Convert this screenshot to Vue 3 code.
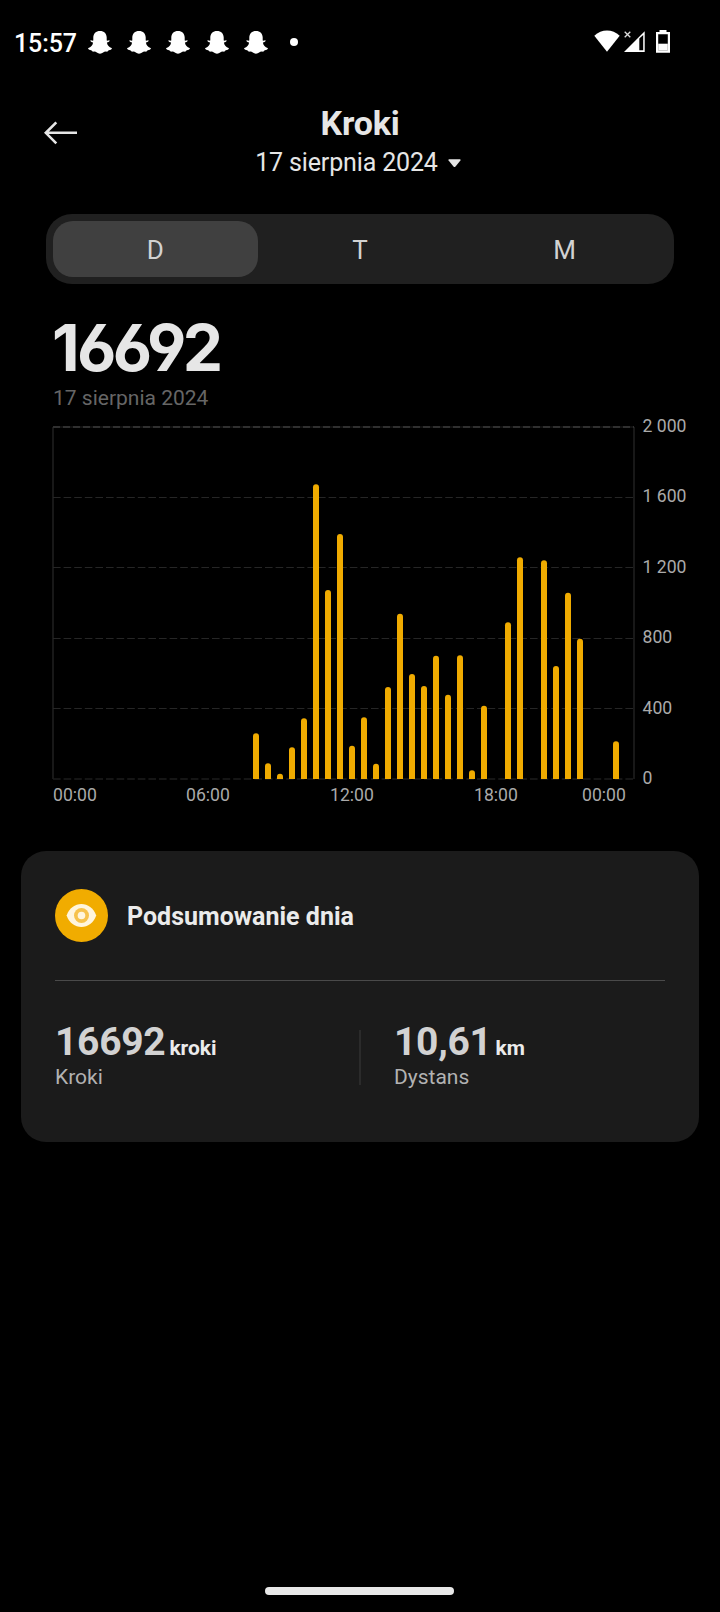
<script setup>
const notifications = 5
const baseline = 352
const bars = [
  [256, 45.7], [268, 15.7], [280, 5.3], [292, 31.7], [304, 60.7], [316, 294.7],
  [328, 189], [340, 245], [352, 33.3], [364, 61.7], [376, 15.3], [388, 92],
  [400, 165.3], [412, 105], [424, 93], [436, 123.3], [448, 84.3], [460, 123.7],
  [472, 8.7], [484, 73.3], [508, 156.7], [520, 221.7], [544, 218.7], [556, 113],
  [568, 186.3], [580, 140.3], [616, 37.7],
].map(([x, h]) => ({ x: x - 53 - 3, h }))

const barPath = ({ x, h }) =>
  `M${x} ${baseline}V${baseline - h + 3}a3 3 0 0 1 6 0V${baseline}z`

const gridLines = [70.5, 140.5, 211.5, 281.5]
const yLabels = [
  { text: '2 000', y: 5.3 }, { text: '1 600', y: 75.3 }, { text: '1 200', y: 146 },
  { text: '800', y: 216 }, { text: '400', y: 286.5 }, { text: '0', y: 357 },
]
const xLabels = [
  { text: '00:00', x: 22 }, { text: '06:00', x: 155 }, { text: '12:00', x: 299 },
  { text: '18:00', x: 443 }, { text: '00:00', x: 551 },
]
const tabs = ['D', 'T', 'M']
const stats = [
  { value: '16692', unit: 'kroki', label: 'Kroki' },
  { value: '10,61', unit: 'km', label: 'Dystans' },
]
</script>

<template>
  <div class="screen">
    <header class="status">
      <span class="clock">15:57</span>
      <div class="notifs">
        <svg v-for="n in notifications" :key="n" class="ghost" viewBox="0 0 24 23">
          <path d="M12 0C7.9 0 5.3 2.7 5.3 6.6V9.6C4.3 9.9 3.2 9 2.5 9.4c-.5.6.7 1.6 2.6 2.2C4.8 14.3 2.7 16.3.4 17c-.6.5-.4 1.2.8 1.7 1.6.6 2.3.3 2.7 1.1.4.9.9.9 2.4.8 1.9 0 3 2.2 5.7 2.2s3.8-2.2 5.7-2.2c1.5.1 2 .1 2.4-.8.4-.8 1.1-.5 2.7-1.1 1.2-.5 1.4-1.2.8-1.7-2.3-.7-4.4-2.7-4.7-5.4 1.9-.6 3.1-1.6 2.6-2.2-.7-.4-1.8.5-2.8.2v-3C18.7 2.7 16.1 0 12 0z" fill="#fff" />
        </svg>
        <i class="dot"></i>
      </div>
      <svg class="system" viewBox="0 0 78 24">
        <path d="M.3 5.7C7.5-1.4 18.5-1.4 25.7 5.7L13 21.7z" fill="#fff" />
        <path d="M30.700 1.700l5.600 5.600m0-5.600l-5.600 5.600" stroke="#ddd" stroke-width="1.300" />
        <path d="M30 22L50.700 1.300V22zM45.300 8.500V20.200H49.200V5z" fill="#fff" fill-rule="evenodd" />
        <path d="M65.500 0h7v2H76v20.700H62V2h3.500zM64.200 4.300V20.200h9.600V4.300z" fill="#fff" fill-rule="evenodd" />
        <path d="M64.200 13.700h9.600v6.500h-9.600z" fill="#fff" />
      </svg>
    </header>

    <nav class="top">
      <svg class="back" viewBox="0 0 34 24">
        <path d="M12.300 1.300L1.800 11.800L12.300 22.300M2 11.800H33" fill="none" stroke="#e6e6e6" stroke-width="2.600" />
      </svg>
      <div class="titles">
        <h1>Kroki</h1>
        <div class="picker">
          <span>17 sierpnia 2024</span>
          <svg class="caret" viewBox="0 0 13 9"><path d="M1 .3h11q1 .3.4 1.300L7.500 7.600q-1 1-2 0L.6 1.600Q0 .6 1 .3z" fill="#e6e6e6" /></svg>
        </div>
      </div>
    </nav>

    <div class="tabs">
      <div v-for="(t, i) in tabs" :key="t" class="tab" :class="{ active: i === 0 }">{{ t }}</div>
    </div>

    <section class="total">
      <div class="big">16692</div>
      <div class="day">17 sierpnia 2024</div>
    </section>

    <svg class="chart" viewBox="0 0 667 385">
      <path d="M0 0V352M581 0V352" class="frame" />
      <path d="M0 0H581" class="top-under" />
      <path d="M0 0H581" class="top-line" />
      <path v-for="y in gridLines" :key="y" :d="`M0 ${y}H581`" class="grid" />
      <path d="M0 352H581" class="base-line" />
      <path v-for="b in bars" :key="b.x" :d="barPath(b)" fill="#f0ab00" />
      <text v-for="l in yLabels" :key="l.text" x="589.500" :y="l.y">{{ l.text }}</text>
      <text v-for="l in xLabels" :key="l.x" :x="l.x" y="373.700" text-anchor="middle">{{ l.text }}</text>
    </svg>

    <section class="card">
      <div class="card-head">
        <svg class="eye" viewBox="0 0 53 53">
          <circle cx="26.500" cy="26.500" r="26.500" fill="#f1ac00" />
          <path d="M11.600 26.500C14.300 19 20 15.100 26.400 15.100S38.500 19 41.200 26.500C38.500 34 32.800 37.900 26.400 37.900S14.300 34 11.600 26.500z" fill="#fff5dd" />
          <circle cx="26.500" cy="26.500" r="7.500" fill="#f7c24b" />
          <circle cx="26.500" cy="26.500" r="3.800" fill="#fff5dd" />
        </svg>
        <h2>Podsumowanie dnia</h2>
      </div>
      <div class="stats">
        <div v-for="s in stats" :key="s.label" class="stat">
          <div class="line"><span class="value">{{ s.value }}</span><span class="unit">{{ s.unit }}</span></div>
          <div class="label">{{ s.label }}</div>
        </div>
      </div>
    </section>

    <div class="home"></div>
  </div>
</template>

<style>
body { background: #000; }
</style>

<style scoped>
* { box-sizing: border-box; }
.screen {
  width: 720px;
  height: 1612px;
  background: #000;
  color: #e6e6e6;
  font-family: Roboto, "Noto Sans", sans-serif;
  display: flex;
  flex-direction: column;
  overflow: hidden;
}
svg { display: block; flex: none; }
.status { height: 96px; padding: 27px 48px 0 14px; display: flex; align-items: flex-start; }
.clock { font-size: 25px; font-weight: 500; line-height: 34px; letter-spacing: -0.1px; color: #fff; width: 74px; }
.notifs { display: flex; gap: 15px; padding-top: 4px; }
.ghost { width: 24px; height: 23px; }
.dot { width: 8px; height: 8px; border-radius: 50%; background: #fff; margin: 7px 0 0 7px; }
.system { width: 78px; height: 24px; margin: 3px 0 0 auto; }
.top { height: 118px; display: flex; position: relative; justify-content: center; }
.back { position: absolute; left: 43.500px; top: 24.500px; width: 34px; height: 24px; }
.titles { display: flex; flex-direction: column; align-items: center; }
h1 { margin: 7px 0 0; font-size: 34px; line-height: 40px; font-weight: 700; letter-spacing: -0.2px; }
.picker { display: flex; align-items: center; gap: 10px; margin-top: 4px; padding-right: 4px; font-size: 25px; line-height: 32px; letter-spacing: -0.15px; }
.caret { width: 13px; height: 9px; }
.tabs { width: 628px; height: 70px; margin-left: 46px; padding: 7px; border-radius: 26px; background: #202020; display: flex; }
.tab { flex: 1; line-height: 58px; font-size: 26px; text-align: center; border-radius: 20px; color: #d2d2d2; }
.tab.active { background: #404040; }
.total { height: 143px; padding-left: 53px; }
.big {
  margin: 24px 0 0 -1px;
  font-family: Inter, sans-serif;
  font-weight: 700;
  font-size: 64px;
  line-height: 80px;
  letter-spacing: -3.600px;
  font-feature-settings: "ss01", "cv03", "cv04";
}
.big::first-letter { letter-spacing: -2.500px; }
.day { margin-top: -3px; font-size: 21px; line-height: 26px; color: #666; }
.chart { width: 667px; height: 385px; margin-left: 53px; overflow: visible; }
.chart text { font-family: Roboto, sans-serif; font-size: 17.6px; fill: #aaa; }
.frame { stroke: #202020; stroke-width: 1.500; fill: none; }
.top-under { stroke: #111; stroke-width: 2; }
.top-line { stroke: #303030; stroke-width: 2; stroke-dasharray: 7 3; }
.grid { stroke: #262626; stroke-width: 1; stroke-dasharray: 7.600 3; }
.base-line { stroke: #1c1c1c; stroke-width: 1.500; stroke-dasharray: 7.600 3; }
.card { margin: 39px 21px 0; height: 291px; border-radius: 25px; background: #1b1b1b; padding: 38px 34px 0; }
.card-head { display: flex; height: 92px; border-bottom: 1px solid #4a4a4a; }
.eye { width: 53px; height: 53px; }
h2 { margin: 0 0 0 19px; font-size: 25px; font-weight: 700; line-height: 55px; color: #ebebeb; }
.stats { display: flex; margin-top: 49px; }
.stat { width: 304px; height: 55px; }
.stat + .stat { border-left: 2px solid #2b2b2b; padding-left: 33px; width: 306px; }
.line { display: flex; align-items: baseline; margin-top: -12px; height: 48px; line-height: 48px; }
.value { font-size: 39px; font-weight: 700; letter-spacing: -0.3px; color: #d2d2d2; }
.unit { font-size: 21px; font-weight: 700; margin-left: 4px; color: #ebebeb; }
.label { font-size: 21px; line-height: 26px; color: #b2b2b2; margin-top: -2px; }
.home { width: 189px; height: 8px; border-radius: 4px; background: #e8e8e8; margin: auto auto 17px 265px; }
</style>
